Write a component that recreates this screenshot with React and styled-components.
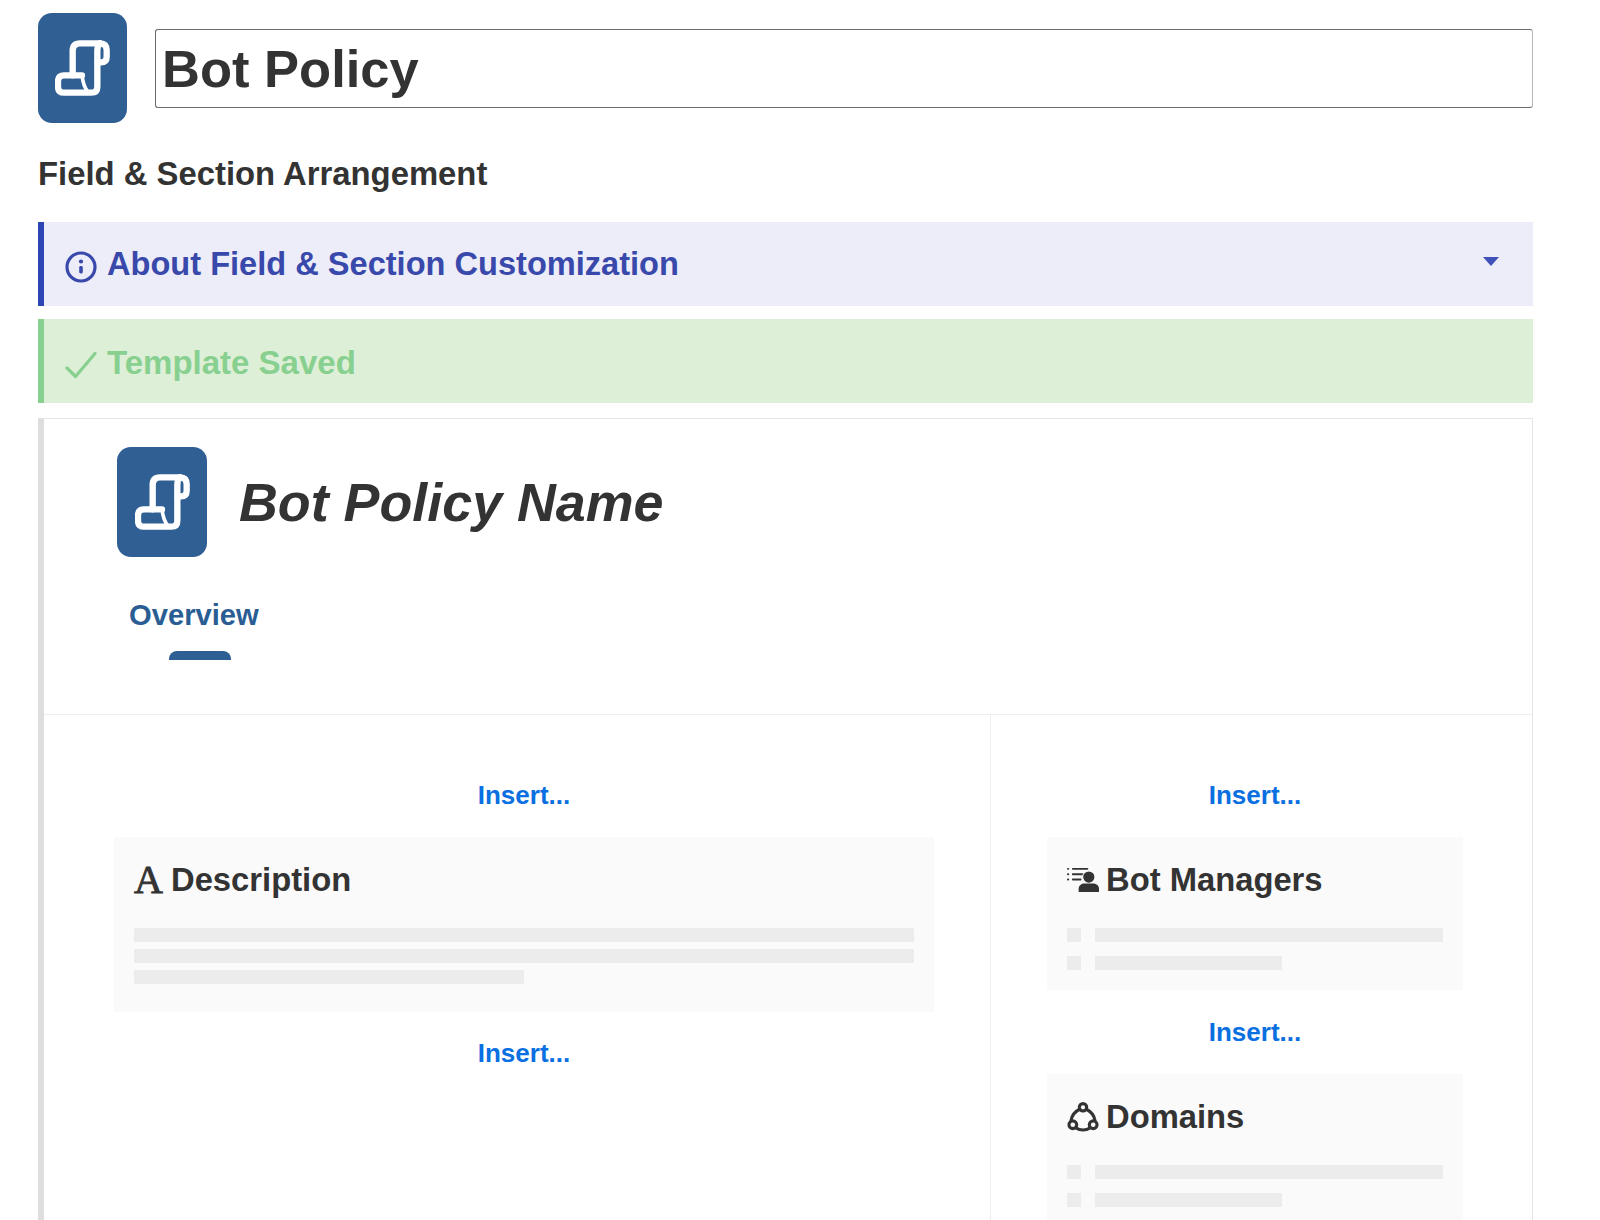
import React from 'react';
import styled, { createGlobalStyle } from 'styled-components';

const GlobalStyle = createGlobalStyle`
  html, body {
    margin: 0;
    height: 1220px;
    overflow: hidden;
    background: #fff;
    font-family: "Liberation Sans", Arial, sans-serif;
    color: #333;
  }
`;

const Page = styled.div`
  padding: 13px 67px 0 38px;
  height: 1207px;
  overflow: hidden;
`;

const TitleRow = styled.div`
  display: flex;
  align-items: center;
  gap: 28px;
`;

const AppIcon = styled.div`
  flex: none;
  width: ${props => props.$width}px;
  height: 110px;
  border-radius: 14px;
  background: #2f5f93;
  display: flex;
  align-items: center;
  justify-content: center;
`;

const TitleInput = styled.div`
  flex: 1;
  box-sizing: border-box;
  height: 79px;
  margin-top: 1px;
  padding-left: 6px;
  border: 1px solid #6b6b6b;
  border-right-color: #b5b5b5;
  border-radius: 3px;
  font-size: 52.5px;
  font-weight: 700;
  line-height: 78px;
  color: #333;
`;

const Heading = styled.h2`
  margin: 32px 0 29px;
  font-size: 32.85px;
  line-height: 38px;
  font-weight: 700;
  color: #333;
`;

const Banner = styled.div`
  box-sizing: border-box;
  height: 84px;
  margin-bottom: ${props => props.$gap}px;
  padding: 0 34px 0 21px;
  display: flex;
  align-items: center;
  border-left: 6px solid ${props => props.$edge};
  background: ${props => props.$bg};
  color: ${props => props.$color};
`;

const BannerIcon = styled.svg`
  flex: none;
  width: 32px;
  height: 32px;
  margin: 6px 10px 0 0;
`;

const BannerText = styled.div`
  flex: 1;
  padding-top: ${props => props.$drop || 0}px;
  font-size: ${props => props.$size || 32.6}px;
  font-weight: 700;
  line-height: 38px;
`;

const Caret = styled.div`
  width: 0;
  height: 0;
  margin-bottom: 6px;
  border-left: 8px solid transparent;
  border-right: 8px solid transparent;
  border-top: 9px solid #3f51b8;
`;

const Panel = styled.div`
  border-top: 1px solid #e4e4e4;
  border-right: 1px solid #e4e4e4;
  border-left: 6px solid #dedede;
`;

const PanelHead = styled.div`
  padding: 28px 0 0 73px;
  border-bottom: 1px solid #eeeeee;
`;

const NameRow = styled.div`
  display: flex;
  align-items: center;
  gap: 32px;
`;

const RecordName = styled.div`
  font-size: 53.8px;
  font-weight: 700;
  font-style: italic;
  color: #333;
`;

const Tab = styled.div`
  margin: 40px 0 0 12px;
  padding-bottom: 54px;
`;

const TabLabel = styled.div`
  font-size: 29.2px;
  line-height: 36px;
  font-weight: 700;
  color: #2a5d94;
`;

const TabMarker = styled.div`
  width: 62px;
  height: 9px;
  margin: 18px 0 0 40px;
  border-radius: 8px 8px 0 0;
  background: #2d5f93;
`;

const Columns = styled.div`
  display: grid;
  grid-template-columns: 946px 1fr;
`;

const Column = styled.div`
  padding: 38px ${props => props.$right}px 0 ${props => props.$left}px;
  & + & {
    border-left: 1px solid #eeeeee;
  }
`;

const InsertSlot = styled.div`
  height: ${props => props.$height || 84}px;
  display: flex;
  align-items: center;
  justify-content: center;
  font-size: 26px;
  font-weight: 700;
  color: #0a6fe0;
`;

const Card = styled.div`
  padding: 23px 20px ${props => props.$bottom}px;
  background: #fafafa;
`;

const CardTitle = styled.div`
  height: 40px;
  margin-bottom: 28px;
  display: flex;
  align-items: center;
  gap: 7px;
  font-size: 32.75px;
  font-weight: 700;
  color: #333;
`;

const SerifGlyph = styled.span`
  width: 29px;
  margin-right: 1px;
  font-family: "Liberation Serif", "Times New Roman", serif;
  font-size: 40px;
  font-weight: 400;
  line-height: 40px;
  text-align: center;
  -webkit-text-stroke: 0.8px #333;
`;

const CardIcon = styled.svg`
  flex: none;
  width: 32px;
  height: 32px;
`;

const TextLines = styled.div`
  display: flex;
  flex-direction: column;
  gap: 7px;
`;

const ListLines = styled.div`
  display: flex;
  flex-direction: column;
  gap: 14px;
`;

const ListRow = styled.div`
  display: flex;
  gap: 14px;
`;

const Bullet = styled.div`
  flex: none;
  width: 14px;
  height: 14px;
  background: #ececec;
`;

const Line = styled.div`
  height: 14px;
  width: ${props => props.$width || '100%'};
  background: #ececec;
`;

const LineTrack = styled.div`
  flex: 1;
`;

function ScrollIcon() {
  return (
    <svg width="55" height="56" viewBox="165 122 165 168" fill="none" stroke="#fff" strokeWidth="19" strokeLinecap="round" strokeLinejoin="round">
      <path d="M218 228V155Q218 132 240 132H300Q320 132 320 153V172Q320 189 303 189H293" />
      <path d="M300 132Q292 140 292 155V262Q292 280 274 280H192Q174 280 174 262V247Q174 228 192 228H246" />
      <path d="M246 228Q250 262 264 278" strokeWidth="11" />
    </svg>
  );
}

function InfoIcon() {
  return (
    <BannerIcon viewBox="0 0 32 32" fill="none">
      <circle cx="16" cy="16" r="14" stroke="currentColor" strokeWidth="3.2" />
      <circle cx="16" cy="10.5" r="2.1" fill="currentColor" />
      <rect x="14.2" y="15" width="3.6" height="7.5" rx="1.4" fill="currentColor" />
    </BannerIcon>
  );
}

function CheckIcon() {
  return (
    <BannerIcon viewBox="0 0 32 32" fill="none">
      <path d="M2 20L10.5 28.5L30 5.5" stroke="currentColor" strokeWidth="3.2" strokeLinecap="round" strokeLinejoin="round" />
    </BannerIcon>
  );
}

function ManagersIcon() {
  return (
    <CardIcon viewBox="0 0 33 33" fill="none">
      <g stroke="#333" strokeWidth="2" strokeLinecap="round">
        <path d="M1 5h.3M1 10.5h.3M1 16h.3" />
        <path d="M6 5h15M6 10.5h12M6 16h8" />
      </g>
      <circle cx="22.5" cy="13.5" r="6.4" fill="#333" stroke="#fafafa" strokeWidth="1.2" />
      <path d="M12 28v-2.5C12 22 15 20 18 20h9c3.5 0 6 2.4 6 5.5V28c0 .6-.5 1-1 1H13c-.6 0-1-.4-1-1z" fill="#333" />
    </CardIcon>
  );
}

function DomainsIcon() {
  return (
    <CardIcon viewBox="0 0 33 33" fill="none" stroke="#333" strokeWidth="3.2">
      <circle cx="16.5" cy="6.5" r="3.8" />
      <circle cx="6" cy="24.5" r="4" />
      <circle cx="27" cy="24.5" r="4" />
      <path d="M13 8.5C8 11 4.8 15.5 4 20.5" />
      <path d="M20 8.5C25 11 28.2 15.5 29 20.5" />
      <path d="M9.5 28C13.5 30.5 19.5 30.5 23.5 28" />
    </CardIcon>
  );
}

function ListBody() {
  return (
    <ListLines>
      <ListRow>
        <Bullet />
        <LineTrack><Line /></LineTrack>
      </ListRow>
      <ListRow>
        <Bullet />
        <LineTrack><Line $width="53.8%" /></LineTrack>
      </ListRow>
    </ListLines>
  );
}

export default function App() {
  return (
    <Page>
      <GlobalStyle />
      <TitleRow>
        <AppIcon $width={89}><ScrollIcon /></AppIcon>
        <TitleInput>Bot Policy</TitleInput>
      </TitleRow>
      <Heading>Field &amp; Section Arrangement</Heading>

      <Banner $gap={13} $edge="#2e45b5" $bg="#ecedf8" $color="#3949ab">
        <InfoIcon />
        <BannerText>About Field &amp; Section Customization</BannerText>
        <Caret />
      </Banner>
      <Banner $gap={15} $edge="#88d08f" $bg="#deefd8" $color="#88d08f">
        <CheckIcon />
        <BannerText $size={33} $drop={3}>Template Saved</BannerText>
      </Banner>

      <Panel>
        <PanelHead>
          <NameRow>
            <AppIcon $width={90}><ScrollIcon /></AppIcon>
            <RecordName>Bot Policy Name</RecordName>
          </NameRow>
          <Tab>
            <TabLabel>Overview</TabLabel>
            <TabMarker />
          </Tab>
        </PanelHead>
        <Columns>
          <Column $left={70} $right={56}>
            <InsertSlot>Insert...</InsertSlot>
            <Card $bottom={28}>
              <CardTitle>
                <SerifGlyph>A</SerifGlyph>
                Description
              </CardTitle>
              <TextLines>
                <Line />
                <Line />
                <Line $width="50%" />
              </TextLines>
            </Card>
            <InsertSlot $height={82}>Insert...</InsertSlot>
          </Column>
          <Column $left={56} $right={69}>
            <InsertSlot>Insert...</InsertSlot>
            <Card $bottom={20}>
              <CardTitle>
                <ManagersIcon />
                Bot Managers
              </CardTitle>
              <ListBody />
            </Card>
            <InsertSlot>Insert...</InsertSlot>
            <Card $bottom={20}>
              <CardTitle>
                <DomainsIcon />
                Domains
              </CardTitle>
              <ListBody />
            </Card>
          </Column>
        </Columns>
      </Panel>
    </Page>
  );
}
